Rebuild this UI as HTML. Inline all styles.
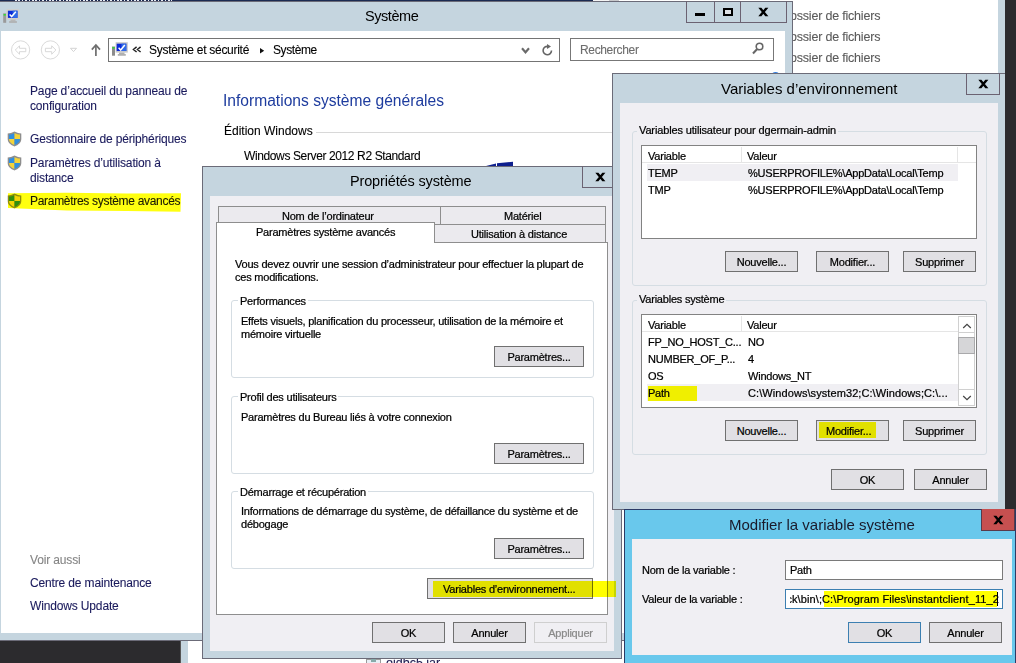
<!DOCTYPE html>
<html><head><meta charset="utf-8">
<style>
*{box-sizing:border-box;margin:0;padding:0}
html,body{width:1016px;height:663px;overflow:hidden}
body{position:relative;background:#2c2b2e;font-family:"Liberation Sans",sans-serif;color:#000}
.a{position:absolute}
.t{position:absolute;white-space:nowrap;line-height:1;-webkit-text-stroke:0.1px currentColor}
.frame{background:#c5d5df}
.dlgbg{background:#f0eff3}
.btn{-webkit-text-stroke:0.22px currentColor;position:absolute;background:#e1e0e4;border:1px solid #707070;padding-top:1px;font-size:11px;letter-spacing:-0.22px;text-align:center;white-space:nowrap}
.cp{font-size:12px;color:#1a1a5c;letter-spacing:-0.15px}
.dl{font-size:11px;color:#000;letter-spacing:-0.22px;-webkit-text-stroke:0.22px currentColor}
.grp{position:absolute;border:1px solid #d5dde3;border-radius:3px}
.xg{position:absolute;font-weight:bold;font-size:13px;line-height:1}
</style></head><body>


<!-- explorer window behind -->
<div class="a frame" style="left:180px;top:0;width:825px;height:663px;border-left:1px solid #555"></div>
<div class="a" style="left:188px;top:0;width:810px;height:663px;background:#fff"></div>
<div class="t" style="left:790px;top:10px;font-size:12.5px;letter-spacing:-0.2px;color:#5a5a5a">ossier de fichiers</div>
<div class="t" style="left:790px;top:31px;font-size:12.5px;letter-spacing:-0.2px;color:#5a5a5a">ossier de fichiers</div>
<div class="t" style="left:790px;top:52px;font-size:12.5px;letter-spacing:-0.2px;color:#5a5a5a">ossier de fichiers</div>
<div class="t" style="left:386px;top:657px;font-size:12.5px;color:#1e1a50">ojdbc5.jar</div>
<div class="a" style="left:366px;top:659px;width:15px;height:6px;border:1px solid #9a9a9a;background:#e8eef5"></div><div class="a" style="left:371px;top:659px;width:5px;height:3px;background:#8aa"></div>

<!-- top navy strip -->
<div class="a" style="left:0;top:0;width:593px;height:2px;background:#1c2b52"></div>
<div class="a" style="left:15px;top:0;width:157px;height:1px;background:repeating-linear-gradient(90deg,#e8ecf4 0 1.6px,transparent 1.6px 3.4px)"></div>
<div class="a" style="left:593px;top:0;width:16px;height:2px;background:#f4f4f4"></div>
<div class="a" style="left:609px;top:0;width:10px;height:2px;background:#c9c9cc"></div>

<!-- ============ SYSTEME WINDOW ============ -->
<div class="a frame" style="left:0;top:1px;width:793px;height:640px;border:1px solid #6b6b78;border-left:none"></div>
<div class="a" style="left:1px;top:31px;width:784px;height:602px;background:#fff"></div>
<div class="t" style="left:365px;top:9px;font-size:14.5px;-webkit-text-stroke:0;letter-spacing:-0.45px;color:#000">Système</div>
<!-- title buttons -->
<div class="a" style="left:686px;top:1px;width:101px;height:22px;border:1px solid #6b6272;border-top:none"></div>
<div class="a" style="left:714px;top:1px;width:1px;height:22px;background:#6b6272"></div>
<div class="a" style="left:740px;top:1px;width:1px;height:22px;background:#6b6272"></div>
<div class="a" style="left:695px;top:13px;width:10px;height:3px;background:#000"></div>
<div class="a" style="left:723px;top:8px;width:10px;height:8px;border:2px solid #000;background:#dde0e4"></div>


<!-- close x -->
<svg class="a" style="left:758px;top:7px" width="11" height="10" viewBox="0 0 11 10"><path d="M0.3 0.8H3.4L10.4 9.2H7.3zM7.3 0.8H10.4L3.4 9.2H0.3z" fill="#000"/></svg>
<!-- title icon -->
<svg class="a" style="left:0;top:0" width="30" height="30" viewBox="108.8 33.2 30 30">
<rect x="112" y="46.5" width="3" height="9.5" fill="#9a9a9a"/><rect x="112.4" y="47.2" width="2.2" height="1.6" fill="#3d3"/>
<rect x="115.3" y="42.4" width="12.6" height="10.4" fill="#d2d0cc"/>
<rect x="116.7" y="43.9" width="9.6" height="7.2" fill="#0b2ad8"/>
<rect x="121.5" y="43.9" width="4.8" height="7.2" fill="#2f6ae8"/>
<path d="M118.4 47.6L120.5 49.8L124.6 45" fill="none" stroke="#fff" stroke-width="1.5"/>
<rect x="119.3" y="52.8" width="5" height="1.6" fill="#b8b8b8"/><rect x="117.9" y="54.4" width="7.8" height="1.6" fill="#adadad"/>
</svg>
<!-- nav -->
<svg class="a" style="left:0;top:30px" width="570" height="40" viewBox="0 30 570 40">
<circle cx="20.6" cy="49.9" r="9.1" fill="none" stroke="#dadada" stroke-width="1"/>
<path d="M15.3 50L19.5 45.8V48.3H25.8V51.7H19.5V54.2z" fill="none" stroke="#d4d4d4" stroke-width="0.9" stroke-linejoin="round"/>
<circle cx="50.4" cy="49.9" r="9.1" fill="none" stroke="#dadada" stroke-width="1"/>
<path d="M55.9 50L51.7 45.8V48.3H45.4V51.7H51.7V54.2z" fill="none" stroke="#d4d4d4" stroke-width="0.9" stroke-linejoin="round"/>
<path d="M70.5 48.3H76.5L73.5 51.6z" fill="none" stroke="#cfcfcf" stroke-width="0.9"/>
<path d="M95.9 56V45.5" stroke="#6e6e6e" stroke-width="1.7"/>
<path d="M91.8 49.6L95.9 45L100 49.6" fill="none" stroke="#6e6e6e" stroke-width="1.7"/>
<rect x="108.5" y="38.5" width="451" height="23" fill="#fff" stroke="#747474" stroke-width="1"/>
<rect x="112" y="46.5" width="3" height="9.2" fill="#8c8c8c"/><rect x="112.4" y="47" width="2.2" height="1.6" fill="#3d3"/>
<rect x="115.6" y="42.2" width="12.2" height="10.4" fill="#c9c9c9"/>
<rect x="116.7" y="43.7" width="9.6" height="7.3" fill="#0b2ad8"/>
<rect x="121.5" y="43.7" width="4.8" height="7.3" fill="#2f6ae8"/>
<path d="M118.6 47.8L120.7 50L124.8 45" fill="none" stroke="#fff" stroke-width="1.5"/>
<rect x="119" y="52.6" width="5.5" height="1.5" fill="#b0b0b0"/><rect x="117.8" y="54.1" width="8" height="1.6" fill="#a8a8a8"/>
<path d="M136.6 46.9L133.4 49.5L136.6 52M140.6 46.9L137.4 49.5L140.6 52" fill="none" stroke="#222" stroke-width="1.4"/>
</svg>
<div class="t cpx" style="left:149px;top:44px;font-size:12px;letter-spacing:-0.28px;color:#000">Système et sécurité</div>
<svg class="a" style="left:259.5px;top:47.5px" width="5" height="6" viewBox="0 0 5 6"><path d="M0 0L4.2 2.7L0 5.4z" fill="#111"/></svg>
<div class="t" style="left:273px;top:44px;font-size:12px;letter-spacing:-0.4px;color:#000">Système</div>
<svg class="a" style="left:521px;top:47px" width="9" height="8" viewBox="0 0 9 8"><path d="M1 1.3L4.5 5.3L8 1.3" fill="none" stroke="#6a6a6a" stroke-width="2.1"/></svg>
<svg class="a" style="left:541px;top:44px" width="13" height="13" viewBox="0 0 13 13"><path d="M10.5 6.5A4.2 4.2 0 1 1 7 2.4" fill="none" stroke="#666" stroke-width="1.6"/><path d="M6 0L10 2.5L6 5z" fill="#666"/></svg>
<!-- search -->
<div class="a" style="left:570px;top:38px;width:204px;height:23px;border:1px solid #777;background:#fff"></div>
<div class="t" style="left:580px;top:44px;font-size:12px;letter-spacing:-0.35px;color:#6d6d6d">Rechercher</div>
<svg class="a" style="left:752px;top:42px" width="12" height="13" viewBox="0 0 12 13"><circle cx="7.5" cy="4.5" r="3.3" fill="none" stroke="#666" stroke-width="1.6"/><path d="M5.2 7L1 11.5" stroke="#666" stroke-width="2"/></svg>

<div class="a" style="left:771.5px;top:71.5px;width:7px;height:6px;border-radius:50%;background:#2f7de0"></div>
<!-- left pane -->
<div class="t cp" style="left:30px;top:84px;line-height:15px">Page d’accueil du panneau de<br>configuration</div>
<svg class="a" style="left:7px;top:131px" width="15" height="16" viewBox="0 0 15 16">
<path d="M7.5 0.6C5 2 2.8 2.4 0.7 2.4V8C0.7 11.5 3.5 14 7.5 15.4C11.5 14 14.3 11.5 14.3 8V2.4C12.2 2.4 10 2 7.5 0.6z" fill="#8e8e8e"/>
<path d="M7.5 2C5.5 3 3.7 3.5 2 3.6V8H7.5z" fill="#2f8fe0"/><path d="M7.5 2C9.5 3 11.3 3.5 13 3.6V8H7.5z" fill="#f3d43a"/>
<path d="M2 8C2 10.8 4.2 12.8 7.5 14V8z" fill="#f3d43a"/><path d="M13 8C13 10.8 10.8 12.8 7.5 14V8z" fill="#2f8fe0"/>
</svg><svg class="a" style="left:7px;top:155px" width="15" height="16" viewBox="0 0 15 16">
<path d="M7.5 0.6C5 2 2.8 2.4 0.7 2.4V8C0.7 11.5 3.5 14 7.5 15.4C11.5 14 14.3 11.5 14.3 8V2.4C12.2 2.4 10 2 7.5 0.6z" fill="#8e8e8e"/>
<path d="M7.5 2C5.5 3 3.7 3.5 2 3.6V8H7.5z" fill="#2f8fe0"/><path d="M7.5 2C9.5 3 11.3 3.5 13 3.6V8H7.5z" fill="#f3d43a"/>
<path d="M2 8C2 10.8 4.2 12.8 7.5 14V8z" fill="#f3d43a"/><path d="M13 8C13 10.8 10.8 12.8 7.5 14V8z" fill="#2f8fe0"/>
</svg><svg class="a" style="left:7px;top:193px" width="15" height="16" viewBox="0 0 15 16">
<path d="M7.5 0.6C5 2 2.8 2.4 0.7 2.4V8C0.7 11.5 3.5 14 7.5 15.4C11.5 14 14.3 11.5 14.3 8V2.4C12.2 2.4 10 2 7.5 0.6z" fill="#8e8e8e"/>
<path d="M7.5 2C5.5 3 3.7 3.5 2 3.6V8H7.5z" fill="#2f8fe0"/><path d="M7.5 2C9.5 3 11.3 3.5 13 3.6V8H7.5z" fill="#f3d43a"/>
<path d="M2 8C2 10.8 4.2 12.8 7.5 14V8z" fill="#f3d43a"/><path d="M13 8C13 10.8 10.8 12.8 7.5 14V8z" fill="#2f8fe0"/>
</svg>
<div class="t cp" style="left:30px;top:133px">Gestionnaire de périphériques</div>
<div class="t cp" style="left:30px;top:156px;line-height:15px">Paramètres d’utilisation à<br>distance</div>
<div class="t cp" style="left:30px;top:195px;letter-spacing:-0.3px;color:#1a1a2a">Paramètres système avancés</div>
<svg class="a" style="left:7px;top:192px;mix-blend-mode:multiply" width="176" height="21" viewBox="0 0 176 21"><path d="M1 1.2L60 0.8L120 1.5L174 1.2L173.5 19.8L120 19L60 18.5L1 16z" fill="#ffff10"/></svg>
<div class="t" style="left:30px;top:554px;font-size:12px;letter-spacing:-0.15px;color:#858585">Voir aussi</div>
<div class="t cp" style="left:30px;top:577px">Centre de maintenance</div>
<div class="t cp" style="left:30px;top:600px">Windows Update</div>

<!-- right content -->
<div class="t" style="left:223px;top:92.5px;font-size:15.6px;-webkit-text-stroke:0;color:#1e3c9e">Informations système générales</div>
<div class="t" style="left:224px;top:125px;font-size:12px;color:#000">Édition Windows</div>
<div class="a" style="left:316px;top:132px;width:470px;height:1px;background:#d8d8d8"></div>
<div class="t" style="left:244px;top:150px;font-size:12px;letter-spacing:-0.38px;color:#000">Windows Server 2012 R2 Standard</div>
<svg class="a" style="left:480px;top:158px" width="40" height="9" viewBox="480 158 40 9"><path d="M484 166.5L496 163.6V166.5zM497 163.2L513 161.8V166.5H497z" fill="#0e1f8e"/></svg>


<!-- ============ PROPRIETES SYSTEME ============ -->
<div class="a frame" style="left:202px;top:166px;width:420px;height:493px;border:1px solid #6b6b78"></div>
<div class="t" style="left:350px;top:174px;font-size:14.5px;-webkit-text-stroke:0;letter-spacing:-0.15px;color:#000">Propriétés système</div>
<div class="a" style="left:582px;top:166px;width:40px;height:22px;border:1px solid #6b6272;border-top:none"></div>
<svg class="a" style="left:594.5px;top:172px" width="11" height="10" viewBox="0 0 11 10"><path d="M0.3 0.8H3.4L10.4 9.2H7.3zM7.3 0.8H10.4L3.4 9.2H0.3z" fill="#000"/></svg>
<div class="a dlgbg" style="left:210px;top:196px;width:404px;height:455px"></div>
<!-- tabs -->
<div class="a" style="left:218px;top:206px;width:223px;height:18px;background:#ebeaee;border:1px solid #8e8e8e;border-bottom:none"></div>
<div class="a" style="left:440px;top:206px;width:166px;height:18px;background:#ebeaee;border:1px solid #8e8e8e;border-bottom:none"></div>
<div class="t dl" style="left:282px;top:211px">Nom de l’ordinateur</div>
<div class="t dl" style="left:504px;top:211px">Matériel</div>
<div class="a" style="left:216px;top:242px;width:392px;height:373px;background:#fff;border:1px solid #8e8e8e"></div>
<div class="a" style="left:434px;top:224px;width:172px;height:18px;background:#ebeaee;border:1px solid #8e8e8e;border-bottom:none"></div>
<div class="t dl" style="left:471px;top:229px">Utilisation à distance</div>
<div class="a" style="left:216px;top:222px;width:219px;height:21px;background:#fff;border:1px solid #8e8e8e;border-bottom:none"></div>
<div class="t dl" style="left:256px;top:227px">Paramètres système avancés</div>

<div class="t dl" style="left:235px;top:258px;line-height:13px">Vous devez ouvrir une session d’administrateur pour effectuer la plupart de<br>ces modifications.</div>

<div class="grp" style="left:231px;top:300px;width:363px;height:78px"></div>
<div class="t dl" style="left:238px;top:296px;background:#fff;padding:0 2px">Performances</div>
<div class="t dl" style="left:241px;top:314.5px;line-height:13px">Effets visuels, planification du processeur, utilisation de la mémoire et<br>mémoire virtuelle</div>
<div class="btn" style="left:494px;top:346px;width:90px;height:21px;line-height:19px">Paramètres...</div>

<div class="grp" style="left:231px;top:396px;width:363px;height:78px"></div>
<div class="t dl" style="left:238px;top:392px;background:#fff;padding:0 2px">Profil des utilisateurs</div>
<div class="t dl" style="left:241px;top:412px">Paramètres du Bureau liés à votre connexion</div>
<div class="btn" style="left:494px;top:443px;width:90px;height:21px;line-height:19px">Paramètres...</div>

<div class="grp" style="left:231px;top:491px;width:363px;height:78px"></div>
<div class="t dl" style="left:238px;top:487px;background:#fff;padding:0 2px">Démarrage et récupération</div>
<div class="t dl" style="left:241px;top:505px;line-height:13px">Informations de démarrage du système, de défaillance du système et de<br>débogage</div>
<div class="btn" style="left:494px;top:538px;width:90px;height:21px;line-height:19px">Paramètres...</div>

<div class="btn" style="left:427px;top:578px;width:166px;height:21px;line-height:19px"></div>
<div class="a" style="left:433px;top:581px;width:183px;height:16px;background:#ffff00;mix-blend-mode:multiply"></div>
<div class="t dl" style="left:443px;top:584px">Variables d’environnement...</div>

<div class="btn" style="left:372px;top:622px;width:73px;height:21px;line-height:19px">OK</div>
<div class="btn" style="left:453px;top:622px;width:73px;height:21px;line-height:19px">Annuler</div>
<div class="btn" style="left:534px;top:622px;width:73px;height:21px;line-height:19px;background:#f0eff3;border-color:#cfcfcf;color:#8a8a8a">Appliquer</div>


<!-- ============ VARIABLES D'ENVIRONNEMENT ============ -->
<div class="a frame" style="left:612px;top:73px;width:393px;height:437px;border:1px solid #6b6b78;border-right:none"></div>
<div class="t" style="left:721px;top:81px;font-size:15px;-webkit-text-stroke:0;color:#000">Variables d’environnement</div>
<div class="a" style="left:966px;top:73px;width:34px;height:22px;border:1px solid #6b6272;border-top:none"></div>
<svg class="a" style="left:978px;top:79px" width="11" height="10" viewBox="0 0 11 10"><path d="M0.3 0.8H3.4L10.4 9.2H7.3zM7.3 0.8H10.4L3.4 9.2H0.3z" fill="#000"/></svg>
<div class="a dlgbg" style="left:620px;top:103px;width:378px;height:399px"></div>

<div class="grp" style="left:632px;top:131px;width:355px;height:155px"></div>
<div class="t dl" style="left:637px;top:125px;background:#f0eff3;padding:0 2px;letter-spacing:-0.14px">Variables utilisateur pour dgermain-admin</div>
<div class="a" style="left:641px;top:145px;width:336px;height:94px;border:1px solid #828282;background:#fff"></div>
<div class="a" style="left:642px;top:146px;width:334px;height:17px;background:#fff;border-bottom:1px solid #e5e5e5"></div>
<div class="a" style="left:741px;top:147px;width:1px;height:16px;background:#e5e5e5"></div>
<div class="a" style="left:957px;top:147px;width:1px;height:16px;background:#e5e5e5"></div>
<div class="t dl" style="left:648px;top:151px">Variable</div>
<div class="t dl" style="left:747px;top:151px">Valeur</div>
<div class="a" style="left:647px;top:164px;width:311px;height:17px;background:#f0eff3"></div>
<div class="t dl" style="left:648px;top:168px">TEMP</div>
<div class="t dl" style="left:748px;top:168px">%USERPROFILE%\AppData\Local\Temp</div>
<div class="t dl" style="left:648px;top:185px">TMP</div>
<div class="t dl" style="left:748px;top:185px">%USERPROFILE%\AppData\Local\Temp</div>
<div class="btn" style="left:725px;top:251px;width:73px;height:21px;line-height:19px">Nouvelle...</div>
<div class="btn" style="left:816px;top:251px;width:73px;height:21px;line-height:19px">Modifier...</div>
<div class="btn" style="left:903px;top:251px;width:73px;height:21px;line-height:19px">Supprimer</div>

<div class="grp" style="left:632px;top:300px;width:355px;height:155px"></div>
<div class="t dl" style="left:637px;top:294px;background:#f0eff3;padding:0 2px">Variables système</div>
<div class="a" style="left:641px;top:314px;width:336px;height:94px;border:1px solid #828282;background:#fff"></div>
<div class="a" style="left:642px;top:315px;width:316px;height:17px;background:#fff;border-bottom:1px solid #e5e5e5"></div>
<div class="a" style="left:741px;top:316px;width:1px;height:16px;background:#e5e5e5"></div>
<div class="t dl" style="left:648px;top:320px">Variable</div>
<div class="t dl" style="left:747px;top:320px">Valeur</div>
<div class="t dl" style="left:648px;top:337px">FP_NO_HOST_C...</div>
<div class="t dl" style="left:748px;top:337px">NO</div>
<div class="t dl" style="left:648px;top:354px">NUMBER_OF_P...</div>
<div class="t dl" style="left:748px;top:354px">4</div>
<div class="t dl" style="left:648px;top:371px">OS</div>
<div class="t dl" style="left:748px;top:371px">Windows_NT</div>
<div class="a" style="left:647px;top:384px;width:311px;height:17px;background:#f0eff3"></div>
<div class="a" style="left:648px;top:385.5px;width:49px;height:15.5px;background:#ffff00;mix-blend-mode:multiply"></div>
<div class="t dl" style="left:648px;top:388px">Path</div>
<div class="t dl" style="left:748px;top:388px;letter-spacing:0.08px">C:\Windows\system32;C:\Windows;C:\...</div>
<!-- scrollbar -->
<div class="a" style="left:958px;top:315px;width:18px;height:92px;background:#fff"></div>
<div class="a" style="left:958px;top:316px;width:17px;height:90px;border:1px solid #d0d0d0"></div>
<div class="a" style="left:958px;top:316px;width:17px;height:17px;border:1px solid #d0d0d0"></div>
<svg class="a" style="left:962px;top:323px" width="10" height="6" viewBox="0 0 10 6"><path d="M1.2 5L5 1.3L8.8 5" fill="none" stroke="#444" stroke-width="1.2"/></svg>
<div class="a" style="left:958px;top:337px;width:17px;height:17px;background:#d6d6d8;border:1px solid #a9a9ab"></div>
<div class="a" style="left:958px;top:389px;width:17px;height:17px;border:1px solid #d0d0d0"></div>
<svg class="a" style="left:962px;top:395px" width="10" height="6" viewBox="0 0 10 6"><path d="M1.2 1L5 4.7L8.8 1" fill="none" stroke="#444" stroke-width="1.2"/></svg>

<div class="btn" style="left:725px;top:420px;width:73px;height:21px;line-height:19px">Nouvelle...</div>
<div class="btn" style="left:816px;top:420px;width:73px;height:21px;line-height:19px"></div>
<div class="a" style="left:819px;top:422px;width:57px;height:16px;background:#ffff00;mix-blend-mode:multiply"></div>
<div class="t dl" style="left:826px;top:426px">Modifier...</div>
<div class="btn" style="left:903px;top:420px;width:73px;height:21px;line-height:19px">Supprimer</div>

<div class="btn" style="left:831px;top:469px;width:73px;height:21px;line-height:19px">OK</div>
<div class="btn" style="left:914px;top:469px;width:73px;height:21px;line-height:19px">Annuler</div>


<!-- ============ MODIFIER LA VARIABLE ============ -->
<div class="a" style="left:624px;top:509px;width:392px;height:155px;background:#69c8ec;border:1px solid #2b3a66"></div>
<div class="t" style="left:729px;top:517px;font-size:15px;-webkit-text-stroke:0;color:#1a1a2a">Modifier la variable système</div>
<div class="a" style="left:981px;top:509px;width:34px;height:22px;background:#c75050;border:1px solid #5a3a4a;border-top:none"></div>
<svg class="a" style="left:993px;top:515px" width="11" height="10" viewBox="0 0 11 10"><path d="M0.3 0.8H3.4L10.4 9.2H7.3zM7.3 0.8H10.4L3.4 9.2H0.3z" fill="#000"/></svg>
<div class="a dlgbg" style="left:632px;top:539px;width:380px;height:116px"></div>
<div class="t dl" style="left:642px;top:565px">Nom de la variable :</div>
<div class="t dl" style="left:642px;top:594px">Valeur de la variable :</div>
<div class="a" style="left:785px;top:560px;width:218px;height:20px;background:#fff;border:1px solid #7a7a7a"></div>
<div class="t dl" style="left:790px;top:565px">Path</div>
<div class="a" style="left:785px;top:589px;width:218px;height:20px;background:#fff;border:1px solid #3c7fb1"></div>
<div class="a" style="left:824px;top:591px;width:173px;height:16px;background:#ffff00;mix-blend-mode:multiply"></div>
<div class="a" style="left:790px;top:591px;width:209px;height:16px;overflow:hidden"><div class="t dl" style="right:0;top:3px;letter-spacing:0.1px">ck\bin\;C:\Program Files\instantclient_11_2</div></div>
<div class="a" style="left:997px;top:592px;width:1px;height:14px;background:#000"></div>
<div class="btn" style="left:848px;top:622px;width:73px;height:21px;line-height:19px;border-color:#3c7fb1">OK</div>
<div class="btn" style="left:929px;top:622px;width:73px;height:21px;line-height:19px">Annuler</div>

</body></html>
